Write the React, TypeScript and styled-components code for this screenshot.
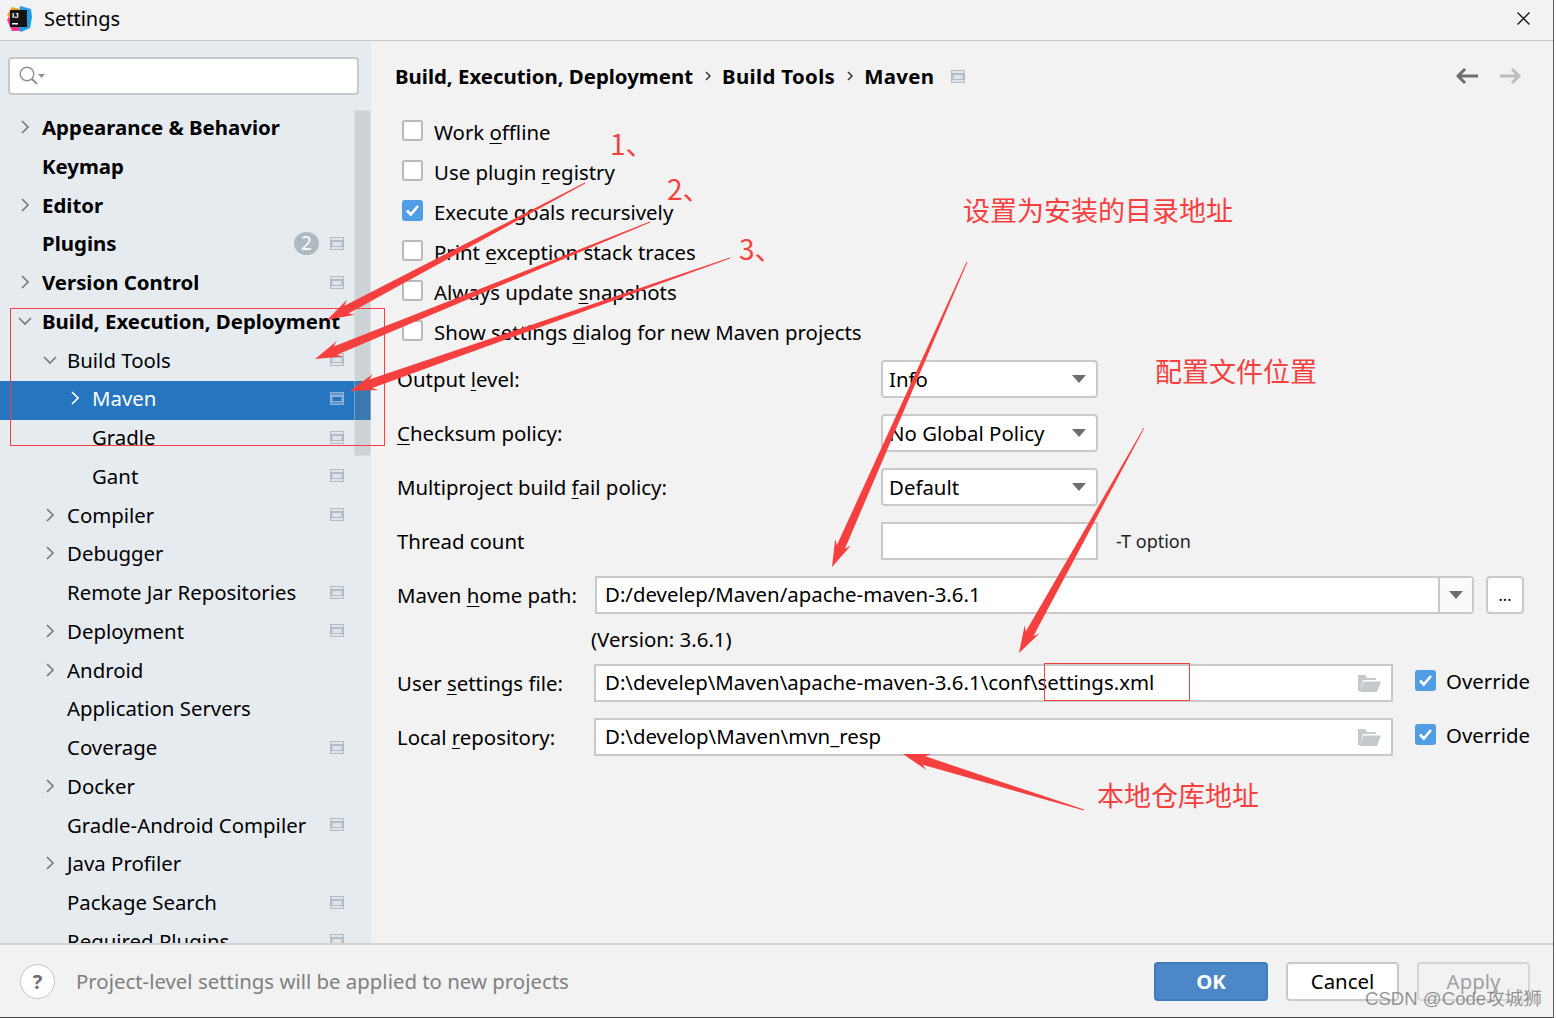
import React from 'react';
import styled, { createGlobalStyle } from 'styled-components';

const GlobalStyle = createGlobalStyle`
  html, body {
    margin: 0;
    padding: 0;
    background: #f2f2f2;
  }
  * {
    box-sizing: border-box;
  }
`;

const FONT = `'Noto Sans', 'Noto Sans CJK SC', sans-serif`;
const RED = '#f6403f';

const Window = styled.div`
  position: relative;
  display: flex;
  flex-direction: column;
  width: 1556px;
  height: 1018px;
  overflow: hidden;
  background: #f2f2f2;
  border-right: 2px solid #fff;
  color: #000;
  font-family: ${FONT};
  font-size: 20.4px;
`;

const Frame = styled.div`
  display: flex;
  flex-direction: column;
  flex: 1;
  min-height: 0;
  border-right: 1px solid #5a5a5a;
  border-bottom: 1px solid #444;
`;

const TitleBar = styled.header`
  display: flex;
  align-items: center;
  flex: 0 0 41px;
  padding: 0 23px 3px 7px;
  border-bottom: 1px solid #c9c9c9;
`;

const TitleText = styled.span`
  margin-left: 11px;
  font-size: 20px;
`;

const CloseButton = styled.span`
  display: flex;
  margin-left: auto;
`;

const Body = styled.div`
  display: flex;
  flex: 1;
  min-height: 0;
`;

const Sidebar = styled.aside`
  position: relative;
  flex: 0 0 371px;
  overflow: hidden;
  padding-top: 16px;
  background: #e6ebf0;
`;

const SearchBox = styled.div`
  display: flex;
  align-items: center;
  width: 351px;
  height: 38px;
  margin: 0 0 14.75px 8px;
  padding-left: 9px;
  background: #fff;
  border: 2px solid #c8c8c8;
  border-radius: 4px;
`;

const Tree = styled.ul`
  margin: 0;
  padding: 0;
  list-style: none;
`;

const TreeRow = styled.li<{ $level: number; $selected?: boolean; $bold?: boolean }>`
  display: flex;
  align-items: center;
  height: 38.75px;
  padding: 0 27px 4px ${({ $level }) => 18 + $level * 25}px;
  background: ${({ $selected }) => ($selected ? '#2675bf' : 'transparent')};
  color: ${({ $selected }) => ($selected ? '#fff' : '#000')};
  font-weight: ${({ $bold }) => ($bold ? 700 : 400)};
  white-space: nowrap;
`;

const ChevronSlot = styled.span`
  display: flex;
  align-items: center;
  flex: 0 0 24px;
`;

const RowLabel = styled.span`
  flex: 1;
`;

const Badge = styled.span`
  display: flex;
  align-items: center;
  justify-content: center;
  width: 25px;
  height: 23px;
  margin-right: 11px;
  border-radius: 50%;
  background: #afb9c0;
  color: #fff;
  font-size: 19px;
  font-weight: 400;
`;

const ScrollThumb = styled.div`
  position: absolute;
  top: 69px;
  left: 354px;
  width: 17px;
  height: 346px;
  background: rgba(125, 130, 135, 0.24);
  border: 1px solid rgba(255, 255, 255, 0.3);
`;

const Content = styled.main`
  flex: 1;
  min-width: 0;
  padding-left: 26px;
`;

const Breadcrumbs = styled.nav`
  display: flex;
  align-items: center;
  height: 70px;
  margin-left: -2px;
  padding-right: 32px;
  font-weight: 700;
`;

const Crumb = styled.span`
  letter-spacing: 0.35px;
`;

const CrumbSep = styled.span`
  display: flex;
  margin: 0 11.5px;
`;

const CrumbPage = styled.span`
  display: flex;
  margin-left: 17px;
`;

const NavArrows = styled.span`
  display: flex;
  gap: 21px;
  margin-left: auto;
`;

const CheckRow = styled.label`
  display: flex;
  align-items: center;
  height: 40px;
  padding-left: 5px;
  white-space: nowrap;
`;

const CheckText = styled.span`
  padding-top: 2px;
`;

const Box = styled.span<{ $checked?: boolean }>`
  display: flex;
  align-items: center;
  justify-content: center;
  flex: 0 0 21px;
  width: 21px;
  height: 21px;
  margin: -2px 11px 0 0;
  border-radius: 3px;
  background: ${({ $checked }) => ($checked ? '#4f9ee3' : '#fff')};
  border: ${({ $checked }) => ($checked ? 'none' : '2px solid #b9b9b9')};
`;

const Mnemonic = styled.span`
  text-decoration: underline;
  text-underline-offset: 3px;
  text-decoration-thickness: 1px;
`;

const FormStack = styled.div`
  margin-top: 1px;
`;

const FieldRow = styled.div<{ $height?: number }>`
  display: flex;
  align-items: center;
  height: ${({ $height }) => $height ?? 54}px;
  white-space: nowrap;
`;

const FieldLabel = styled.span<{ $width: number }>`
  flex: 0 0 ${({ $width }) => $width}px;
`;

const Select = styled.div`
  display: flex;
  align-items: center;
  width: 217px;
  height: 38px;
  padding: 0 10px 0 6px;
  background: #fff;
  border: 2px solid #c9c9c9;
  border-radius: 4px;
`;

const SelectValue = styled.span`
  flex: 1;
`;

const PlainInput = styled.div`
  width: 217px;
  height: 38px;
  background: #fff;
  border: 2px solid #c9c9c9;
`;

const Hint = styled.span`
  margin-left: 18px;
  font-size: 18px;
  color: #222;
`;

const ComboBox = styled.div`
  display: flex;
  width: 879px;
  height: 38px;
  background: #fff;
  border: 2px solid #c9c9c9;
  border-radius: 0 4px 4px 0;
`;

const ComboValue = styled.span`
  flex: 1;
  padding-left: 8px;
  line-height: 33px;
`;

const ComboArrow = styled.span`
  display: flex;
  align-items: center;
  justify-content: center;
  width: 34px;
  background: #fafafa;
  border-left: 2px solid #c9c9c9;
`;

const DotsButton = styled.span`
  display: flex;
  align-items: flex-end;
  justify-content: center;
  width: 38px;
  height: 38px;
  margin-left: 12px;
  padding-bottom: 6px;
  background: #fff;
  border: 2px solid #c9c9c9;
  border-radius: 4px;
  font-size: 16px;
`;

const VersionText = styled.span`
  margin-left: 194px;
`;

const PathInput = styled.div`
  display: flex;
  align-items: center;
  width: 799px;
  height: 38px;
  padding: 0 10px 0 9px;
  background: #fff;
  border: 2px solid #c9c9c9;
`;

const PathValue = styled.span`
  flex: 1;
  padding-bottom: 2px;
`;

const OverrideCheck = styled.label`
  display: flex;
  align-items: center;
  margin: -4px 0 0 22px;
`;

const OverrideBox = styled(Box)`
  margin-right: 10px;
`;

const Footer = styled.footer`
  display: flex;
  align-items: center;
  flex: 0 0 74px;
  padding: 0 23px 0 20px;
  border-top: 2px solid #d2d2d2;
`;

const HelpButton = styled.span`
  display: flex;
  align-items: center;
  justify-content: center;
  width: 35px;
  height: 35px;
  margin-right: 21px;
  background: #fff;
  border: 1px solid #c4c4c4;
  border-radius: 50%;
  color: #6e6e6e;
  font-size: 20px;
  font-weight: 700;
`;

const FooterText = styled.span`
  flex: 1;
  color: #808080;
`;

const Button = styled.span<{ $variant?: 'primary' | 'disabled' }>`
  display: flex;
  align-items: center;
  justify-content: center;
  width: ${({ $variant }) => ($variant === 'primary' ? 114 : 113)}px;
  height: 39px;
  margin-left: ${({ $variant }) => ($variant === 'primary' ? 0 : 18)}px;
  border-radius: 4px;
  font-weight: ${({ $variant }) => ($variant === 'primary' ? 700 : 400)};
  color: ${({ $variant }) =>
    $variant === 'primary' ? '#fff' : $variant === 'disabled' ? '#a0a0a0' : '#000'};
  background: ${({ $variant }) =>
    $variant === 'primary' ? '#4c87c7' : $variant === 'disabled' ? '#f2f2f2' : '#fff'};
  border: 2px solid
    ${({ $variant }) =>
      $variant === 'primary' ? '#3f7cbd' : $variant === 'disabled' ? '#d6d6d6' : '#c9c9c9'};
`;

const Watermark = styled.span`
  position: absolute;
  left: 1365px;
  top: 985px;
  color: rgba(110, 110, 110, 0.72);
  font-family: 'Liberation Sans', 'Noto Sans CJK SC', sans-serif;
  font-size: 18.6px;
  line-height: 28px;
  white-space: nowrap;
`;

const Overlay = styled.svg`
  position: absolute;
  top: 0;
  left: 0;
  pointer-events: none;
`;

const Note = styled.span<{ $x: number; $y: number; $size?: number }>`
  position: absolute;
  left: ${({ $x }) => $x}px;
  top: ${({ $y }) => $y}px;
  color: ${RED};
  font-family: 'Noto Sans CJK SC', sans-serif;
  font-size: ${({ $size }) => $size ?? 27}px;
  line-height: 36px;
  white-space: nowrap;
`;

const Chevron = ({ open, color = '#7a7a7a' }: { open?: boolean; color?: string }) => (
  <svg width="14" height="14" viewBox="0 0 14 14" fill="none" stroke={color} strokeWidth="1.7">
    {open ? <path d="M1 4l6 6 6-6" /> : <path d="M4 1l6 6-6 6" />}
  </svg>
);

const PageIcon = ({ selected }: { selected?: boolean }) => {
  const frame = selected ? '#8fb3d8' : '#b3bcc5';
  const fill = selected ? '#5f95cc' : '#e0e5ea';
  return (
    <svg width="14" height="13" viewBox="0 0 14 13">
      <rect width="14" height="13" fill={frame} />
      <rect x="1" y="1" width="12" height="11" fill={fill} />
      <rect x="1" y="3" width="12" height="7" fill={frame} />
      <rect x="2.5" y="5" width="9" height="4" fill={selected ? '#2675bf' : '#dfe4e9'} />
    </svg>
  );
};

const TriangleDown = () => (
  <svg width="14" height="8" viewBox="0 0 14 8">
    <path d="M0 0h14L7 8z" fill="#6e6e6e" />
  </svg>
);

const CheckMark = () => (
  <svg width="15" height="13" viewBox="0 0 15 13" fill="none" stroke="#fff" strokeWidth="2.6">
    <path d="M2 6.5l3.8 4L13 2" />
  </svg>
);

const FolderIcon = () => (
  <svg width="24" height="18" viewBox="0 0 24 18">
    <path d="M1 17V1h7l2 3h9v2H6L3 17z" fill="#c3c9cd" />
    <path d="M6.5 7.5H24L20 18H2.5z" fill="#c3c9cd" />
  </svg>
);

const SearchIcon = () => (
  <svg width="27" height="20" viewBox="0 0 27 20" fill="none">
    <circle cx="8" cy="8" r="6.8" stroke="#8a9299" strokeWidth="1.4" />
    <path d="M13 13l5 5" stroke="#8a9299" strokeWidth="2" />
    <path d="M19 8h7l-3.5 4z" fill="#8a9299" />
  </svg>
);

const AppLogo = () => (
  <svg width="26" height="26" viewBox="0 0 26 26">
    <path d="M13 0l11 3 1 8-2 11-9 4-4-5z" fill="#1f9de8" />
    <path d="M0 14l3-5 7 4 3 12-8 0z" fill="#f0398c" />
    <path d="M0 9l5-8 8 2-3 8-6 3z" fill="#f9a11b" />
    <rect x="3" y="4" width="17" height="17" fill="#141414" />
    <text x="5" y="12" fill="#fff" fontSize="8" fontWeight="700" fontFamily="'Liberation Sans', sans-serif">
      IJ
    </text>
    <rect x="5" y="17" width="6" height="1.5" fill="#fff" />
  </svg>
);

const ArrowIcon = ({ color, flip }: { color: string; flip?: boolean }) => (
  <svg width="22" height="16" viewBox="0 0 22 16" fill="none" stroke={color} strokeWidth="3">
    <path d={flip ? 'M20 8H1M13 1l7 7-7 7' : 'M2 8h20M9 1L2 8l7 7'} />
  </svg>
);

type TreeItem = {
  label: string;
  level: number;
  chevron?: 'open' | 'closed';
  bold?: boolean;
  page?: boolean;
  badge?: string;
  selected?: boolean;
};

const TREE: TreeItem[] = [
  { label: 'Appearance & Behavior', level: 0, chevron: 'closed', bold: true },
  { label: 'Keymap', level: 0, bold: true },
  { label: 'Editor', level: 0, chevron: 'closed', bold: true },
  { label: 'Plugins', level: 0, bold: true, page: true, badge: '2' },
  { label: 'Version Control', level: 0, chevron: 'closed', bold: true, page: true },
  { label: 'Build, Execution, Deployment', level: 0, chevron: 'open', bold: true },
  { label: 'Build Tools', level: 1, chevron: 'open', page: true },
  { label: 'Maven', level: 2, chevron: 'closed', page: true, selected: true },
  { label: 'Gradle', level: 2, page: true },
  { label: 'Gant', level: 2, page: true },
  { label: 'Compiler', level: 1, chevron: 'closed', page: true },
  { label: 'Debugger', level: 1, chevron: 'closed' },
  { label: 'Remote Jar Repositories', level: 1, page: true },
  { label: 'Deployment', level: 1, chevron: 'closed', page: true },
  { label: 'Android', level: 1, chevron: 'closed' },
  { label: 'Application Servers', level: 1 },
  { label: 'Coverage', level: 1, page: true },
  { label: 'Docker', level: 1, chevron: 'closed' },
  { label: 'Gradle-Android Compiler', level: 1, page: true },
  { label: 'Java Profiler', level: 1, chevron: 'closed' },
  { label: 'Package Search', level: 1, page: true },
  { label: 'Required Plugins', level: 1, page: true },
];

// tapered screenshot-tool arrow, thin at the tail and wide at the head
const arrowPoints = (tx: number, ty: number, hx: number, hy: number) => {
  const len = Math.hypot(hx - tx, hy - ty);
  const ux = (hx - tx) / len;
  const uy = (hy - ty) / len;
  const nx = -uy;
  const ny = ux;
  const neckX = hx - ux * 22;
  const neckY = hy - uy * 22;
  const barbX = hx - ux * 27;
  const barbY = hy - uy * 27;
  const p = (x: number, y: number) => `${x.toFixed(1)},${y.toFixed(1)}`;
  return [
    p(tx + nx * 0.4, ty + ny * 0.4),
    p(neckX + nx * 4.4, neckY + ny * 4.4),
    p(barbX + nx * 8.5, barbY + ny * 8.5),
    p(hx, hy),
    p(barbX - nx * 8.5, barbY - ny * 8.5),
    p(neckX - nx * 4.4, neckY - ny * 4.4),
    p(tx - nx * 0.4, ty - ny * 0.4),
  ].join(' ');
};

const ARROWS = [
  [585, 183, 327, 320],
  [650, 222, 315, 359],
  [730, 258, 350, 391],
  [967, 262, 832, 567],
  [1144, 428, 1019, 653],
  [1084, 810, 903, 754],
];

const App = () => (
  <>
    <GlobalStyle />
    <Window>
      <Frame>
        <TitleBar>
          <AppLogo />
          <TitleText>Settings</TitleText>
          <CloseButton>
            <svg width="13" height="13" viewBox="0 0 13 13" stroke="#111" strokeWidth="1.3">
              <path d="M0.5 0.5l12 12M12.5 0.5l-12 12" />
            </svg>
          </CloseButton>
        </TitleBar>
        <Body>
          <Sidebar>
            <SearchBox>
              <SearchIcon />
            </SearchBox>
            <Tree>
              {TREE.map((item) => (
                <TreeRow key={item.label} $level={item.level} $selected={item.selected} $bold={item.bold}>
                  <ChevronSlot>
                    {item.chevron && (
                      <Chevron open={item.chevron === 'open'} color={item.selected ? '#fff' : '#7a7a7a'} />
                    )}
                  </ChevronSlot>
                  <RowLabel>{item.label}</RowLabel>
                  {item.badge && <Badge>{item.badge}</Badge>}
                  {item.page && <PageIcon selected={item.selected} />}
                </TreeRow>
              ))}
            </Tree>
            <ScrollThumb />
          </Sidebar>
          <Content>
            <Breadcrumbs>
              Build, Execution, Deployment
              <CrumbSep>
                <svg width="6" height="10" viewBox="0 0 6 10" fill="none" stroke="#333" strokeWidth="1.5">
                  <path d="M1 1l4 4-4 4" />
                </svg>
              </CrumbSep>
              <Crumb>Build Tools</Crumb>
              <CrumbSep>
                <svg width="6" height="10" viewBox="0 0 6 10" fill="none" stroke="#333" strokeWidth="1.5">
                  <path d="M1 1l4 4-4 4" />
                </svg>
              </CrumbSep>
              <Crumb>Maven</Crumb>
              <CrumbPage>
                <PageIcon />
              </CrumbPage>
              <NavArrows>
                <ArrowIcon color="#6e6e6e" />
                <ArrowIcon color="#bdbdbd" flip />
              </NavArrows>
            </Breadcrumbs>
            <CheckRow>
              <Box />
              <CheckText>
                Work <Mnemonic>o</Mnemonic>ffline
              </CheckText>
            </CheckRow>
            <CheckRow>
              <Box />
              <CheckText>
                Use plugin <Mnemonic>r</Mnemonic>egistry
              </CheckText>
            </CheckRow>
            <CheckRow>
              <Box $checked>
                <CheckMark />
              </Box>
              <CheckText>Execute goals recursively</CheckText>
            </CheckRow>
            <CheckRow>
              <Box />
              <CheckText>
                Print <Mnemonic>e</Mnemonic>xception stack traces
              </CheckText>
            </CheckRow>
            <CheckRow>
              <Box />
              <CheckText>
                Always update <Mnemonic>s</Mnemonic>napshots
              </CheckText>
            </CheckRow>
            <CheckRow>
              <Box />
              <CheckText>
                Show settings <Mnemonic>d</Mnemonic>ialog for new Maven projects
              </CheckText>
            </CheckRow>
            <FormStack>
              <FieldRow>
                <FieldLabel $width={484}>
                  Output <Mnemonic>l</Mnemonic>evel:
                </FieldLabel>
                <Select>
                  <SelectValue>Info</SelectValue>
                  <TriangleDown />
                </Select>
              </FieldRow>
              <FieldRow>
                <FieldLabel $width={484}>
                  <Mnemonic>C</Mnemonic>hecksum policy:
                </FieldLabel>
                <Select>
                  <SelectValue>No Global Policy</SelectValue>
                  <TriangleDown />
                </Select>
              </FieldRow>
              <FieldRow>
                <FieldLabel $width={484}>
                  Multiproject build <Mnemonic>f</Mnemonic>ail policy:
                </FieldLabel>
                <Select>
                  <SelectValue>Default</SelectValue>
                  <TriangleDown />
                </Select>
              </FieldRow>
              <FieldRow>
                <FieldLabel $width={484}>Thread count</FieldLabel>
                <PlainInput />
                <Hint>-T option</Hint>
              </FieldRow>
              <FieldRow>
                <FieldLabel $width={198}>
                  Maven <Mnemonic>h</Mnemonic>ome path:
                </FieldLabel>
                <ComboBox>
                  <ComboValue>D:/develep/Maven/apache-maven-3.6.1</ComboValue>
                  <ComboArrow>
                    <TriangleDown />
                  </ComboArrow>
                </ComboBox>
                <DotsButton>...</DotsButton>
              </FieldRow>
              <FieldRow $height={34}>
                <VersionText>(Version: 3.6.1)</VersionText>
              </FieldRow>
              <FieldRow>
                <FieldLabel $width={197}>
                  User <Mnemonic>s</Mnemonic>ettings file:
                </FieldLabel>
                <PathInput>
                  <PathValue>D:\develep\Maven\apache-maven-3.6.1\conf\settings.xml</PathValue>
                  <FolderIcon />
                </PathInput>
                <OverrideCheck>
                  <OverrideBox $checked>
                    <CheckMark />
                  </OverrideBox>
                  Override
                </OverrideCheck>
              </FieldRow>
              <FieldRow>
                <FieldLabel $width={197}>
                  Local <Mnemonic>r</Mnemonic>epository:
                </FieldLabel>
                <PathInput>
                  <PathValue>D:\develop\Maven\mvn_resp</PathValue>
                  <FolderIcon />
                </PathInput>
                <OverrideCheck>
                  <OverrideBox $checked>
                    <CheckMark />
                  </OverrideBox>
                  Override
                </OverrideCheck>
              </FieldRow>
            </FormStack>
          </Content>
        </Body>
        <Footer>
          <HelpButton>?</HelpButton>
          <FooterText>Project-level settings will be applied to new projects</FooterText>
          <Button $variant="primary">OK</Button>
          <Button>Cancel</Button>
          <Button $variant="disabled">Apply</Button>
        </Footer>
      </Frame>
      <Overlay width="1556" height="1018" viewBox="0 0 1556 1018">
        <rect x="10.5" y="308.5" width="374" height="137" fill="none" stroke={RED} />
        <rect x="1044.5" y="663.5" width="145" height="37" fill="none" stroke={RED} />
        {ARROWS.map(([tx, ty, hx, hy]) => (
          <polygon key={`${tx}-${ty}`} points={arrowPoints(tx, ty, hx, hy)} fill={RED} />
        ))}
      </Overlay>
      <Note $x={610} $y={125} $size={28}>1、</Note>
      <Note $x={667} $y={170} $size={28}>2、</Note>
      <Note $x={739} $y={230} $size={28}>3、</Note>
      <Note $x={963} $y={192}>设置为安装的目录地址</Note>
      <Note $x={1155} $y={353}>配置文件位置</Note>
      <Note $x={1097} $y={777}>本地仓库地址</Note>
      <Watermark>CSDN @Code攻城狮</Watermark>
    </Window>
  </>
);

export default App;
